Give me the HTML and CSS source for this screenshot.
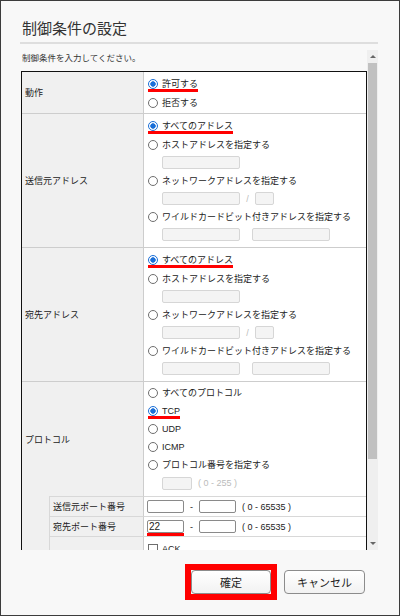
FILE: index.html
```html
<!DOCTYPE html>
<html lang="ja">
<head>
<meta charset="utf-8">
<title>制御条件の設定</title>
<link rel="stylesheet" href="styles.css">
</head>
<body>
<div class="dialog">
  <div class="title">制御条件の設定</div>
  <div class="sep"></div>
  <div class="scroll">
    <div class="content">
      <p class="lead">制御条件を入力してください。</p>
      <div class="grid">
        <div class="lbl first">動作</div>
        <div class="val first">
          <div class="opt"><span class="mark"><i class="radio on"></i>許可する</span></div>
          <div class="opt"><i class="radio"></i>拒否する</div>
        </div>

        <div class="lbl">送信元アドレス</div>
        <div class="val">
          <div class="opt"><span class="mark"><i class="radio on"></i>すべてのアドレス</span></div>
          <div class="opt"><i class="radio"></i>ホストアドレスを指定する</div>
          <div class="inrow"><span class="box w78"></span></div>
          <div class="opt"><i class="radio"></i>ネットワークアドレスを指定する</div>
          <div class="inrow"><span class="box w78"></span><span class="slash">/</span><span class="box w19"></span></div>
          <div class="opt"><i class="radio"></i>ワイルドカードビット付きアドレスを指定する</div>
          <div class="inrow wild"><span class="box w78"></span><span class="box w78"></span></div>
        </div>

        <div class="lbl">宛先アドレス</div>
        <div class="val">
          <div class="opt"><span class="mark"><i class="radio on"></i>すべてのアドレス</span></div>
          <div class="opt"><i class="radio"></i>ホストアドレスを指定する</div>
          <div class="inrow"><span class="box w78"></span></div>
          <div class="opt"><i class="radio"></i>ネットワークアドレスを指定する</div>
          <div class="inrow"><span class="box w78"></span><span class="slash">/</span><span class="box w19"></span></div>
          <div class="opt"><i class="radio"></i>ワイルドカードビット付きアドレスを指定する</div>
          <div class="inrow wild"><span class="box w78"></span><span class="box w78"></span></div>
        </div>

        <div class="lbl">プロトコル</div>
        <div class="val proto">
          <div class="opt"><i class="radio"></i>すべてのプロトコル</div>
          <div class="opt"><span class="mark"><i class="radio on"></i>TCP</span></div>
          <div class="opt"><i class="radio"></i>UDP</div>
          <div class="opt"><i class="radio"></i>ICMP</div>
          <div class="opt"><i class="radio"></i>プロトコル番号を指定する</div>
          <div class="inrow pn"><span class="box w30"></span><span class="hint">( 0 - 255 )</span></div>
        </div>

        <div class="indent"></div>
        <div class="sub">送信元ポート番号</div>
        <div class="val port"><span class="pbox"></span><span class="dash">-</span><span class="pbox"></span><span class="range">( 0 - 65535 )</span></div>
        <div class="sub">宛先ポート番号</div>
        <div class="val port"><span class="mark m22"><span class="pbox">22</span></span><span class="dash">-</span><span class="pbox"></span><span class="range">( 0 - 65535 )</span></div>
        <div class="sub"></div>
        <div class="val flags">
          <div class="opt"><i class="check"></i>ACK</div>
        </div>
      </div>
    </div>
    <div class="sbar">
      <div class="arr"><span class="tri-up"></span></div>
      <div class="thumb"></div>
      <div class="track"></div>
      <div class="arr"><span class="tri-down"></span></div>
    </div>
  </div>
  <div class="footer">
    <span class="hl"><button class="btn ok" type="button">確定</button></span>
    <button class="btn cancel" type="button">キャンセル</button>
  </div>
</div>
</body>
</html>
```
FILE: styles.css
```css
html, body {
  margin: 0;
  padding: 0;
}
body {
  font-family: "Liberation Sans", "Noto Sans CJK JP", sans-serif;
  color: #222;
  background: #f8f8f8;
}
.dialog {
  box-sizing: border-box;
  width: 400px;
  height: 616px;
  border: 1px solid #3c3c3c;
  background: #f8f8f8;
  padding: 0 21px 0 19px;
}
.title {
  font-family: "Noto Sans CJK JP", sans-serif;
  font-size: 15px;
  line-height: 20px;
  height: 20px;
  padding: 17px 0 0 2px;
  color: #333;
}
.sep {
  height: 2px;
  background: #dedede;
  margin-top: 4px;
}
.scroll {
  display: flex;
  height: 500px;
  margin-top: 6px;
}
.content {
  width: 347px;
  overflow: hidden;
  flex: none;
}
.lead {
  margin: 0;
  font-family: "Noto Sans CJK JP", sans-serif;
  font-size: 8.5px;
  line-height: 14px;
  height: 14px;
  padding-left: 2px;
  color: #333;
}
.grid {
  margin: 7px 0 0 1px;
  width: 346px;
  box-sizing: border-box;
  border: 1px solid #111;
  border-bottom: none;
  display: grid;
  grid-template-columns: 27px 94px 223px;
  font-size: 9px;
}
.lbl {
  grid-column: span 2;
  background: #f0f0f0;
  border-top: 1px solid #cdcdcd;
  display: flex;
  align-items: center;
  padding-left: 3px;
  white-space: nowrap;
}
.val {
  background: #fff;
  border-top: 1px solid #cdcdcd;
  border-left: 1px solid #cdcdcd;
  padding: 2px 0 4px 4px;
  min-width: 0;
}
.lbl.first, .val.first {
  border-top: none;
}
.val.first {
  padding: 2px 0 1px 4px;
}
.val.proto {
  padding: 2px 0 6px 4px;
}
.opt {
  display: flex;
  align-items: center;
  height: 19px;
  gap: 4px;
  white-space: nowrap;
  line-height: 10px;
}
.proto .opt {
  height: 18px;
}
.radio {
  box-sizing: border-box;
  width: 10px;
  height: 10px;
  border-radius: 50%;
  border: 1px solid #6e6e6e;
  background: #fff;
  flex: none;
}
.radio.on {
  border-color: #1a6fd8;
  background: radial-gradient(circle, #1a6fd8 0 2.4px, #fff 3px);
}
.check {
  box-sizing: border-box;
  width: 10px;
  height: 10px;
  border: 1px solid #6e6e6e;
  background: #fff;
  flex: none;
}
.mark {
  display: flex;
  align-items: center;
  gap: 4px;
  border-bottom: 3px solid #f00;
  margin-bottom: -3px;
}
.mark.m22 {
  gap: 0;
}
.inrow {
  display: flex;
  align-items: center;
  height: 17px;
  padding-left: 14px;
}
.inrow.wild {
  gap: 12px;
}
.proto .inrow.pn {
  height: 16px;
  align-items: flex-end;
}
.box {
  box-sizing: border-box;
  height: 13px;
  border: 1px solid #d6d6d6;
  background: #f4f4f4;
  border-radius: 2px;
  flex: none;
}
.w78 { width: 78px; }
.w19 { width: 19px; }
.w30 { width: 30px; }
.slash {
  color: #bbb;
  margin: 0 6px;
  width: 3px;
  text-align: center;
}
.hint {
  color: #bbb;
  margin-left: 6px;
  line-height: 13px;
}
.indent {
  grid-row: span 3;
  background: #f0f0f0;
}
.sub {
  background: #f0f0f0;
  border-top: 1px solid #d8d8d8;
  border-left: 1px solid #d8d8d8;
  display: flex;
  align-items: center;
  padding-left: 3px;
  white-space: nowrap;
}
.val.port {
  display: flex;
  align-items: center;
  height: 19px;
  padding: 0 0 0 3px;
  border-top-color: #d8d8d8;
}
.pbox {
  box-sizing: border-box;
  width: 37px;
  height: 13px;
  border: 1px solid #8a8a8a;
  border-radius: 2px;
  background: #fff;
  font-size: 10px;
  line-height: 11px;
  padding-left: 1px;
  flex: none;
}
.dash {
  margin: 0 6px;
  width: 3px;
  text-align: center;
}
.range {
  margin-left: 6px;
  white-space: nowrap;
}
.val.flags {
  padding: 3px 0 0 4px;
  border-top-color: #d8d8d8;
}
.val.flags .opt {
  height: 18px;
}
.sbar {
  width: 11px;
  background: #efefef;
  display: flex;
  flex-direction: column;
  align-items: center;
  flex: none;
}
.arr {
  height: 13px;
  width: 11px;
  display: flex;
  align-items: center;
  justify-content: center;
  flex: none;
}
.tri-up {
  width: 0;
  height: 0;
  border-left: 3px solid transparent;
  border-right: 3px solid transparent;
  border-bottom: 3px solid #666;
}
.tri-down {
  width: 0;
  height: 0;
  border-left: 3px solid transparent;
  border-right: 3px solid transparent;
  border-top: 3px solid #666;
}
.thumb {
  width: 9px;
  height: 396px;
  background: #c1c1c1;
  flex: none;
}
.track {
  flex: 1;
}
.footer {
  display: flex;
  justify-content: flex-end;
  align-items: center;
  gap: 7px;
  margin-top: 14px;
  padding-right: 13px;
}
.hl {
  display: flex;
  border: 6px solid #f00;
}
.btn {
  box-sizing: border-box;
  height: 24px;
  margin: 0;
  padding: 0;
  border: 1px solid #8c8c8c;
  border-radius: 4px;
  background: linear-gradient(#ffffff, #f2f2f2);
  font-family: "Noto Sans CJK JP", sans-serif;
  font-size: 11px;
  color: #222;
  display: flex;
  align-items: center;
  justify-content: center;
}
.ok { width: 80px; }
.cancel { width: 81px; }
```
